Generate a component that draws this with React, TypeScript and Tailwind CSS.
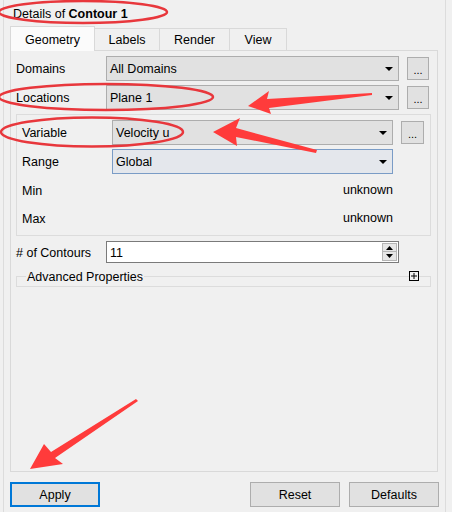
import React from "react"

function Arrow() {
  return (
    <svg width="8" height="4" viewBox="0 0 8 4" className="shrink-0">
      <path d="M0 0 H8 L4 4 Z" fill="#000" />
    </svg>
  )
}

function Combo({ text, width, focused }: { text: string; width: string; focused?: boolean }) {
  return (
    <div
      className={`${width} h-[25px] flex items-center justify-between pl-[3px] pr-[5px] border ${
        focused ? "border-[#7a9cc6] bg-[#e4e7ec]" : "border-[#adadad] bg-[#e1e1e1]"
      }`}
    >
      <span className="pt-[2px]">{text}</span>
      <Arrow />
    </div>
  )
}

function Dots({ width }: { width: string }) {
  return (
    <div className={`${width} h-[23px] border border-[#adadad] bg-[#e1e1e1] flex items-center justify-center text-[11px] leading-none pt-[4px]`}>
      ...
    </div>
  )
}

function Button({ label, primary }: { label: string; primary?: boolean }) {
  return (
    <div
      className={`w-[90px] h-[25px] flex items-center justify-center bg-[#e1e1e1] ${
        primary ? "border-2 border-[#0078d7]" : "border border-[#adadad]"
      }`}
    >
      <span className="pt-[2px]">{label}</span>
    </div>
  )
}

function Annotations() {
  return (
    <svg className="absolute inset-0 pointer-events-none" width="452" height="512" viewBox="0 0 452 512">
      <g fill="none" stroke="#e8373c" strokeWidth="2.5">
        <ellipse cx="83" cy="12" rx="84" ry="11" />
        <ellipse cx="106" cy="97" rx="107" ry="13" />
        <ellipse cx="92" cy="132" rx="91" ry="14.5" />
      </g>
      <g fill="#ff3b3b">
        <polygon points="248,106 269,91 267,99 372,93 372,95 269,108 271,114" />
        <polygon points="213,132 240,118 236,128 317,150 316,153 236,137 237,146" />
        <polygon points="30,469 44,444 51,452 136,399 138,401 55,458 63,464" />
      </g>
    </svg>
  )
}

export default function App() {
  return (
    <div
      className="relative w-[452px] h-[512px] bg-[#f0f0f0] text-[12.5px] text-black overflow-hidden"
      style={{ fontFamily: '"Liberation Sans", Arial, sans-serif' }}
    >
      <div className="ml-[3px] w-[443px] h-full border-l border-r border-[#dcdcdc] pl-[6px] pr-[7px] flex flex-col">
        <div className="h-[26px] flex items-center pl-[3px]">
          <span className="pt-[2px]">
            Details of <b>Contour 1</b>
          </span>
        </div>

        <div className="h-[24px] flex items-start relative z-10">
          <div className="w-[85px] h-[25px] bg-[#fbfbfb] border border-b-0 border-[#d9d9d9] flex items-center justify-center">
            <span className="pt-[2px]">Geometry</span>
          </div>
          <div className="w-[65px] h-[22px] mt-[2px] border border-l-0 border-b-0 border-[#d9d9d9] flex items-center justify-center">
            <span className="pt-[2px]">Labels</span>
          </div>
          <div className="w-[70px] h-[22px] mt-[2px] border border-l-0 border-b-0 border-[#d9d9d9] flex items-center justify-center">
            <span className="pt-[2px]">Render</span>
          </div>
          <div className="w-[57px] h-[22px] mt-[2px] border border-l-0 border-b-0 border-[#d9d9d9] flex items-center justify-center">
            <span className="pt-[2px]">View</span>
          </div>
        </div>

        <div className="h-[422px] border border-[#d9d9d9] pl-[5px] pr-[6px] pt-[5px] flex flex-col">
          <div className="flex items-center h-[25px]">
            <span className="w-[90px] pt-[2px]">Domains</span>
            <Combo text="All Domains" width="w-[293px]" />
            <div className="ml-[8px]">
              <Dots width="w-[22px]" />
            </div>
          </div>
          <div className="flex items-center h-[25px] mt-[4px]">
            <span className="w-[90px] pt-[2px]">Locations</span>
            <Combo text="Plane 1" width="w-[293px]" />
            <div className="ml-[8px]">
              <Dots width="w-[22px]" />
            </div>
          </div>

          <div className="mt-[4px] h-[122px] border border-[#dcdcdc] pl-[5px] pt-[5px] flex flex-col">
            <div className="flex items-center h-[25px]">
              <span className="w-[90px] pt-[2px]">Variable</span>
              <Combo text="Velocity u" width="w-[281px]" />
              <div className="ml-[8px]">
                <Dots width="w-[23px]" />
              </div>
            </div>
            <div className="flex items-center h-[25px] mt-[4px]">
              <span className="w-[90px] pt-[2px]">Range</span>
              <Combo text="Global" width="w-[281px]" focused />
            </div>
            <div className="flex h-[28px] mt-[2px]">
              <span className="w-[90px] self-center pt-[2px]">Min</span>
              <span className="w-[281px] text-right mt-[5px]">unknown</span>
            </div>
            <div className="flex h-[28px]">
              <span className="w-[90px] self-center pt-[2px]">Max</span>
              <span className="w-[281px] text-right mt-[5px]">unknown</span>
            </div>
          </div>

          <div className="flex items-center h-[22px] mt-[5px]">
            <span className="w-[90px] pt-[2px]"># of Contours</span>
            <div className="w-[293px] h-[22px] bg-white border border-[#7a7a7a] flex items-center justify-between pl-[3px] pr-px">
              <span className="pt-[2px]">11</span>
              <div className="w-[15px] h-[18px] flex flex-col">
                <div className="h-[9px] bg-[#e6e6e6] border border-[#b5b5b5] flex items-center justify-center">
                  <svg width="7" height="4" viewBox="0 0 7 4">
                    <path d="M0 4 H7 L3.5 0 Z" fill="#000" />
                  </svg>
                </div>
                <div className="h-[9px] bg-[#e6e6e6] border border-t-0 border-[#b5b5b5] flex items-center justify-center">
                  <svg width="7" height="4" viewBox="0 0 7 4">
                    <path d="M0 0 H7 L3.5 4 Z" fill="#000" />
                  </svg>
                </div>
              </div>
            </div>
          </div>

          <div className="relative mt-[13px] h-[11px] border border-[#dcdcdc]">
            <span className="absolute left-[9px] -top-[8px] px-px bg-[#f0f0f0] leading-[16px]">
              Advanced Properties
            </span>
            <div className="absolute right-[11px] -top-[6px] w-[10px] h-[10px] border border-black bg-[#f0f0f0] flex items-center justify-center">
              <svg width="6" height="6" viewBox="0 0 6 6">
                <path d="M3 0 V6 M0 3 H6" stroke="#000" strokeWidth="1" />
              </svg>
            </div>
          </div>
        </div>

        <div className="mt-[10px] flex items-center">
          <Button label="Apply" primary />
          <div className="ml-auto flex gap-[9px] -mr-[1px]">
            <Button label="Reset" />
            <Button label="Defaults" />
          </div>
        </div>
      </div>
      <Annotations />
    </div>
  )
}
